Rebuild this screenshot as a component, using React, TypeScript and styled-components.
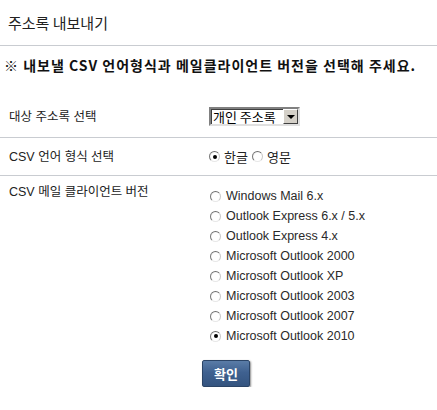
import React from 'react'
import styled, { createGlobalStyle } from 'styled-components'

const GlobalStyle = createGlobalStyle`
  body {
    margin: 0;
    background: #fff;
    font-family: "Liberation Sans", "Noto Sans CJK KR", sans-serif;
    color: #222;
  }
`

const Page = styled.div`
  width: 437px;
`

const Header = styled.div`
  height: 45px;
  display: flex;
  align-items: center;
  padding-left: 8px;
  border-bottom: 1px solid #c9ccd1;
  font-family: "Noto Sans CJK KR", sans-serif;
  font-size: 15px;
  color: #222;
`

const Notice = styled.p`
  margin: 0;
  padding: 10px 0 0 4px;
  line-height: 18px;
  font-family: "Noto Sans CJK KR", sans-serif;
  font-weight: 700;
  font-size: 14px;
  letter-spacing: 1px;
  color: #111;
  white-space: nowrap;
`

const Row = styled.div<{ $pad: string; $align?: string; $line?: boolean }>`
  display: grid;
  grid-template-columns: 209px 1fr;
  align-items: ${p => p.$align || 'start'};
  padding: ${p => p.$pad};
  border-bottom: ${p => (p.$line ? '1px solid #c9ccd1' : 'none')};
`

const Label = styled.div`
  padding-left: 9px;
  font-size: 12.5px;
  line-height: 20px;
  font-family: "Liberation Sans", "Noto Sans CJK KR", sans-serif;
`

const FakeSelect = styled.div`
  width: 85px;
  height: 15px;
  display: flex;
  align-items: center;
  justify-content: space-between;
  border: 2px solid;
  border-color: #808080 #e0e0e0 #e0e0e0 #808080;
  box-shadow: inset 1px 1px 0 #404040;
  background: #fff;
  padding-left: 2px;
  font-family: "Noto Sans CJK KR", sans-serif;
  font-size: 13px;
  color: #000;
  line-height: 15px;
`

const Arrow = styled.span`
  width: 15px;
  height: 15px;
  box-sizing: border-box;
  background: #d4d0c8;
  border: 1px solid;
  border-color: #fff #404040 #404040 #fff;
  display: flex;
  align-items: center;
  justify-content: center;
  &::after {
    content: '';
    border-left: 4px solid transparent;
    border-right: 4px solid transparent;
    border-top: 4px solid #000;
  }
`

const Inline = styled.div`
  display: flex;
  align-items: center;
  font-family: "Noto Sans CJK KR", sans-serif;
  font-size: 13px;
  color: #222;
`

const Radio = styled.span<{ $on?: boolean }>`
  width: 11px;
  height: 11px;
  box-sizing: border-box;
  border-radius: 50%;
  border: 1px solid;
  border-color: #6d6d6d #c8c8c8 #e8e8e8 #7a7a7a;
  background: radial-gradient(circle at 60% 60%, #fff 55%, #dcdcdc 100%);
  display: inline-flex;
  align-items: center;
  justify-content: center;
  margin-right: 4px;
  flex-shrink: 0;
  &::after {
    content: '';
    width: 4px;
    height: 4px;
    border-radius: 50%;
    background: ${p => (p.$on ? '#000' : 'transparent')};
  }
`

const RadioText = styled.span`
  margin-right: 4px;
`

const List = styled.ul`
  margin: 0;
  padding: 4px 0 0 1px;
  list-style: none;
`

const Item = styled.li`
  height: 20px;
  display: flex;
  align-items: center;
  font-family: "Liberation Sans", "Noto Sans CJK KR", sans-serif;
  font-size: 12.5px;
  color: #2a2a2a;
`

const ItemRadio = styled(Radio)`
  margin-right: 5px;
`

const Footer = styled.div`
  padding: 14px 0 0 202px;
`

const Button = styled.button`
  width: 48px;
  height: 27px;
  border: 1px solid #2b4466;
  border-radius: 2px;
  background: linear-gradient(#5a7ca7, #3f6190 45%, #34547f);
  box-shadow: 1px 1px 2px rgba(0, 0, 0, 0.45);
  color: #fff;
  font-family: "Noto Sans CJK KR", sans-serif;
  font-weight: 700;
  font-size: 13px;
  padding: 0;
  cursor: pointer;
`

const clients = [
  'Windows Mail 6.x',
  'Outlook Express 6.x / 5.x',
  'Outlook Express 4.x',
  'Microsoft Outlook 2000',
  'Microsoft Outlook XP',
  'Microsoft Outlook 2003',
  'Microsoft Outlook 2007',
  'Microsoft Outlook 2010',
]

export default function App() {
  return (
    <Page>
      <GlobalStyle />
      <Header>주소록 내보내기</Header>
      <Notice>※ 내보낼 CSV 언어형식과 메일클라이언트 버전을 선택해 주세요.</Notice>
      <Row $pad="33px 0 10px" $line>
        <Label>대상 주소록 선택</Label>
        <FakeSelect>
          개인 주소록
          <Arrow />
        </FakeSelect>
      </Row>
      <Row $pad="0" $align="center" $line style={{ height: 37 }}>
        <Label>CSV 언어 형식 선택</Label>
        <Inline>
          <Radio $on />
          <RadioText>한글</RadioText>
          <Radio />
          <RadioText>영문</RadioText>
        </Inline>
      </Row>
      <Row $pad="6px 0 0">
        <Label>CSV 메일 클라이언트 버전</Label>
        <List>
          {clients.map((c, i) => (
            <Item key={c}>
              <ItemRadio $on={i === clients.length - 1} />
              {c}
            </Item>
          ))}
        </List>
      </Row>
      <Footer>
        <Button>확인</Button>
      </Footer>
    </Page>
  )
}
